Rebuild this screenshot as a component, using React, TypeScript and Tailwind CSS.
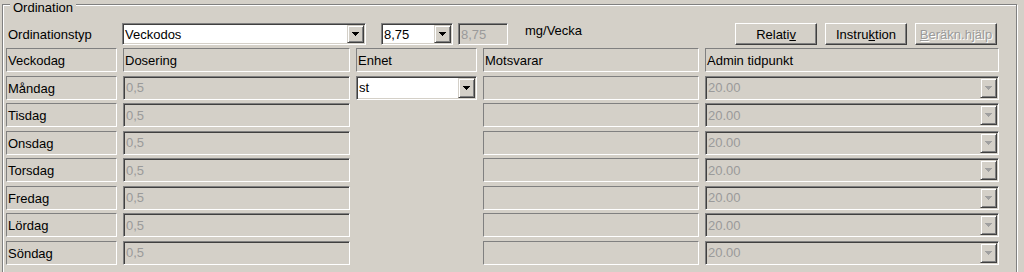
const days = ["Måndag", "Tisdag", "Onsdag", "Torsdag", "Fredag", "Lördag", "Söndag"];

function Arrow({ disabled }: { disabled?: boolean }) {
  return (
    <svg width="7" height="4" viewBox="0 0 7 4" shapeRendering="crispEdges">
      <path
        d="M0 0h7v1h-1v1h-1v1h-1v1h-1v-1h-1v-1h-1v-1h-1z"
        fill={disabled ? "#a0a0a0" : "#000"}
      />
    </svg>
  );
}

function DropBtn({ disabled }: { disabled?: boolean }) {
  return (
    <div className="flex w-[17px] shrink-0 items-center justify-center self-stretch border border-t-[#d4d0c8] border-l-[#d4d0c8] border-r-[#404040] border-b-[#404040] bg-[#d4d0c8] shadow-[inset_1px_1px_0_#fff,inset_-1px_-1px_0_#808080]">
      <Arrow disabled={disabled} />
    </div>
  );
}

function Combo({
  value,
  className,
  disabled,
}: {
  value: string;
  className: string;
  disabled?: boolean;
}) {
  return (
    <div
      className={`flex border border-t-[#808080] border-l-[#808080] border-r-white border-b-white p-[1px] shadow-[inset_1px_1px_0_#404040,inset_-1px_-1px_0_#d4d0c8] ${
        disabled ? "bg-[#d4d0c8] text-[#9a9a9a]" : "bg-white text-black"
      } ${className}`}
    >
      <div className="flex flex-1 items-center px-[1px] text-[13px]">{value}</div>
      <DropBtn disabled={disabled} />
    </div>
  );
}

function Field({ value, className }: { value: string; className: string }) {
  return (
    <div
      className={`flex items-center border border-t-[#808080] border-l-[#808080] border-r-white border-b-white bg-[#d4d0c8] px-[2px] text-[13px] text-[#9a9a9a] shadow-[inset_1px_1px_0_#404040,inset_-1px_-1px_0_#d4d0c8] ${className}`}
    >
      {value}
    </div>
  );
}

function Cell({ children }: { children?: React.ReactNode }) {
  return (
    <div className="flex items-center border border-t-[#808080] border-l-[#808080] border-r-white border-b-white px-[1px] pt-[1px] text-[13px] text-black">
      {children}
    </div>
  );
}

function Btn({ children, disabled }: { children: React.ReactNode; disabled?: boolean }) {
  return (
    <div
      className={`flex h-[22px] w-[82px] items-center justify-center border border-t-white border-l-white border-r-[#404040] border-b-[#404040] bg-[#d4d0c8] text-[13px] shadow-[inset_-1px_-1px_0_#808080] ${
        disabled ? "text-[#9a9a9a] [text-shadow:1px_1px_0_#fff]" : "text-black"
      }`}
    >
      {children}
    </div>
  );
}

export default function App() {
  return (
    <div className="h-[272px] w-[1024px] overflow-hidden bg-[#d4d0c8] pl-[2px] pt-[4px] font-['Liberation_Sans',Arial,sans-serif] leading-[15px]">
      <div className="relative h-[300px] w-[1015px] border border-[#808080] pl-[3px] pt-[18px] shadow-[inset_1px_1px_0_#fff,1px_1px_0_#fff]">
        <span className="absolute left-[7px] top-[-5px] bg-[#d4d0c8] px-[3px] text-[13px] text-black">
          Ordination
        </span>

        <div className="flex h-[22px] items-center">
          <div className="w-[116px] pl-[2px] text-[13px] text-black">Ordinationstyp</div>
          <Combo value="Veckodos" className="h-[22px] w-[244px]" />
          <Combo value="8,75" className="ml-[15px] h-[22px] w-[72px]" />
          <Field value="8,75" className="ml-[5px] h-[22px] w-[50px]" />
          <span className="ml-[17px] self-start text-[13px] text-black">mg/Vecka</span>
          <div className="ml-auto mr-[19px] flex gap-[8px]">
            <Btn>
              Relati<u>v</u>
            </Btn>
            <Btn>
              Instru<u>k</u>tion
            </Btn>
            <Btn disabled>
              <u>B</u>eräkn.hjälp
            </Btn>
          </div>
        </div>

        <div className="mt-[3px] grid auto-rows-[24px] grid-cols-[111px_227px_121px_216px_294px] gap-x-[6px] gap-y-[3.5px]">
          <Cell>Veckodag</Cell>
          <Cell>Dosering</Cell>
          <Cell>Enhet</Cell>
          <Cell>Motsvarar</Cell>
          <Cell>Admin tidpunkt</Cell>
          {days.map((d, i) => (
            <div key={d} className="contents">
              <Cell>{d}</Cell>
              <Field value="0,5" className="" />
              {i === 0 ? <Combo value="st" className="" /> : <div />}
              <Cell />
              <Combo value="20.00" className="" disabled />
            </div>
          ))}
        </div>
      </div>
    </div>
  );
}
